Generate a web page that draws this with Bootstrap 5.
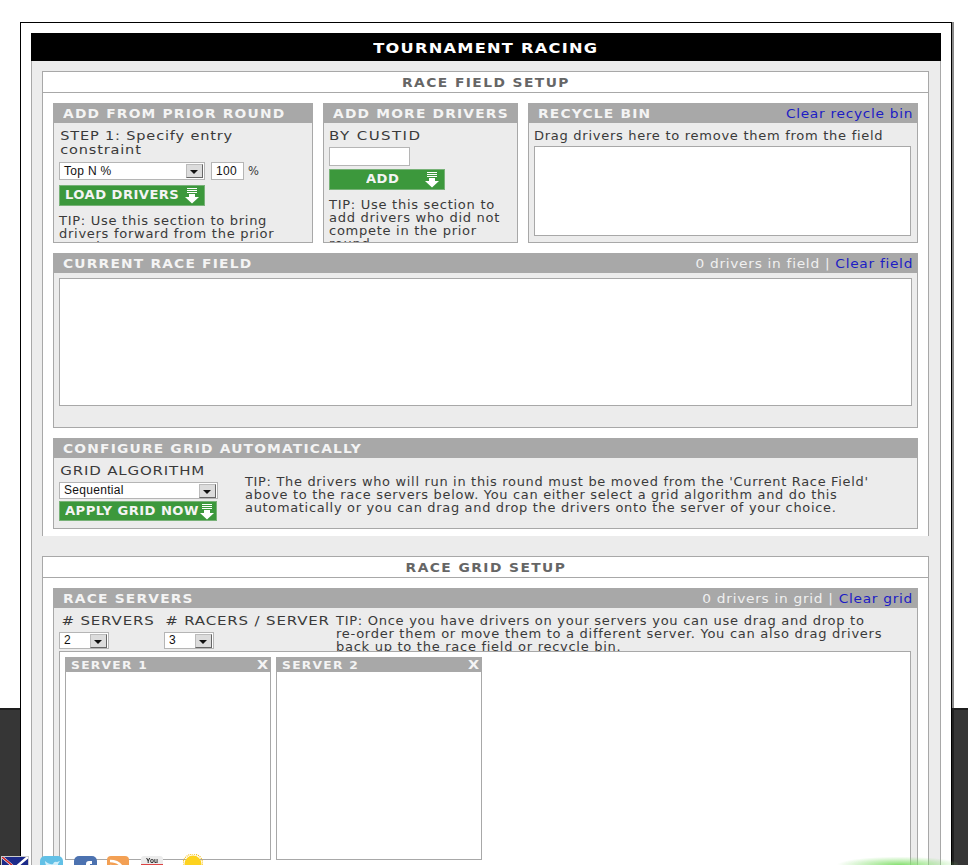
<!DOCTYPE html>
<html lang="en">
<head>
<meta charset="utf-8">
<title>Tournament Racing</title>
<link rel="stylesheet" href="https://cdn.jsdelivr.net/npm/bootstrap@5.3.0/dist/css/bootstrap.min.css">
<style>
html,body{height:865px;overflow:hidden}
body{margin:0;font-family:"DejaVu Sans",sans-serif;font-size:12px;color:#3a3a3a;line-height:13px;
 background:
  linear-gradient(#8a8a8a,#8a8a8a) 952px 22px/2px 686px no-repeat,
  linear-gradient(#202020,#202020) 952px 708px/2px 157px no-repeat,
  linear-gradient(#fff 708px,#1e1e1e 708px,#1e1e1e 710px,#363636 710px)}
.shell{width:932px;height:843px;overflow:hidden;margin:22px 0 0 20px;border:1px solid #000;border-bottom:0;background:#fff;padding:10px}
.page-title{height:28px;background:#000;color:#fff;font-weight:700;font-size:13.5px;letter-spacing:1.05px;line-height:30px;text-align:center}
.page-title span,.setup-title span{display:inline-block;transform:scaleX(1.2)}
.page-body{background:#ececec;border:solid #a8a8a8;border-width:0 1px;padding:10px 11px 0 10px;height:960px}
.setup{background:#fff;border:1px solid #a8a8a8;border-bottom:0;padding:0 10px}
.setup-one{height:465px}
.setup-two{height:440px;margin-top:20px}
.setup-title{height:21px;margin:0 -10px 10px;border-bottom:1px solid #a8a8a8;text-align:center;font-weight:700;font-size:11.5px;letter-spacing:1.2px;color:#666;line-height:22px}
.pane{background:#ececec;border:1px solid #a8a8a8;overflow:hidden}
.pane-head{height:20px;background:#a8a8a8;color:#f4f4f4;margin:-1px -1px 0;padding:0 5px 0 10px;font-weight:700;font-size:11.5px;letter-spacing:1px;line-height:22px;white-space:nowrap}
.head-text{display:inline-block;transform:scaleX(1.2);transform-origin:0 50%}
.head-side{display:inline-block;transform:scaleX(1.145);transform-origin:100% 50%;font-weight:400;font-size:12px;letter-spacing:.62px;color:#f0f0f0}
.head-side a{color:#1c1cc4;text-decoration:none}
.lbl{font-size:12.5px;letter-spacing:.7px;transform:scaleX(1.2);transform-origin:0 50%;white-space:nowrap;padding-left:1px}
.lbl-tall{line-height:14px;font-size:12.1px}
.lbl-cust{letter-spacing:1.2px;padding-left:0}
.tip{font-size:11.5px;letter-spacing:.62px;transform:scaleX(1.135);transform-origin:0 0;white-space:nowrap;padding-top:1px}
.pct{font-size:11.5px;margin-left:4px}
.drop{background:#fff;border:1px solid #a8a8a8}
.fld{display:flex;align-items:center;background:#fff;border:1px solid #b5b5b5;height:18px;font-family:"Liberation Sans",sans-serif;font-size:12px;color:#111;letter-spacing:.3px;padding-left:4px;justify-content:space-between;flex:none}
.arr{width:17px;height:14px;margin-right:1px;background:#dcdcdc;border:1px solid #666;border-top-color:#bbb;border-left-color:#bbb;position:relative;flex:none}
.arr::after{content:"";position:absolute;left:3px;top:5px;border:4px solid transparent;border-top:4px solid #111;border-bottom:0}
.go{display:flex;align-items:center;justify-content:space-between;height:21px;background:#3c983c;border:1px solid #78b278;color:#f4f4f4;font-weight:700;font-size:11.5px;letter-spacing:.4px;padding:0 4px 0 5px;white-space:nowrap}
.go span{display:inline-block;transform:scaleX(1.14);transform-origin:0 50%}
.go svg{flex:none}
.pad-a{padding:6px 5px}
.pad-c{padding:6px 6px 6px 5px}
.pa{width:260px;height:140px;flex:none}
.pb{width:195px;height:140px;flex:none}
.pc{width:390px;height:140px;flex:none}
.panes{gap:10px}
.w-sel{width:146px}
.w-num{width:33px;margin-left:6px}
.sel-row{margin-top:5px}
.go-load{width:146px;margin-top:5px}
.tip-a{margin-top:8px}
.w-cust{width:81px;height:19px;margin-top:5px}
.go-add{width:116px;margin-top:3px;padding-left:36px}
.bin{height:90px;margin-top:3px}
.p-current{height:175px;margin-top:10px}
.d-current{height:128px;margin:5px 5px 0}
.p-config{height:91px;margin-top:10px}
.algo{width:159px;flex:none}
.w-algo{width:159px;height:17px;margin-top:5px}
.go-apply{width:158px;height:20px;margin-top:2px;padding-right:1px}
.tip-config{margin:11px 0 0 27px;transform:scaleX(1.125)}
.p-servers{height:420px}
.srv-row{padding:6px 5px 0;height:43px;overflow:hidden}
.col-n{width:105px;flex:none}
.col-r{width:172px;flex:none}
.lbl-n{padding-left:2px}
.w-small{width:50px;height:17px;margin-top:5px}
.grid-zone{height:360px;margin:0 6px 0 5px;padding:5px 5px 0;gap:5px}
.srv{width:206px;height:203px;border:1px solid #a8a8a8;background:#fff;flex:none}
.srv-head{height:15px;background:#a8a8a8;color:#f4f4f4;font-weight:700;font-size:10.5px;letter-spacing:1.1px;line-height:17px;padding:0 4px 0 6px;margin:-1px -1px 0}
.srv-head span{display:inline-block;transform:scaleX(1.17);transform-origin:0 50%}
.srv-head b{font-size:12px;letter-spacing:0;transform:scaleX(1.2);display:inline-block}
.dock{position:fixed;left:0;right:0;top:854px;height:11px;overflow:hidden;pointer-events:none}
.dock-row{display:flex;align-items:flex-start;padding:2px 0 0 1px}
.dock svg{display:block;flex:none}
.i-tw{margin-left:11px}.i-fb{margin-left:11px}.i-rs{margin-left:10px}.i-yt{margin-left:12px}.i-sun{margin:-2px 0 0 20px}
.glow{position:fixed;left:828px;width:130px;top:853px;height:12px;background:radial-gradient(ellipse 48% 70% at 55% 100%,#86e070,rgba(255,255,255,0))}
</style>
</head>
<body>
<div class="shell">
 <div class="page-title"><span>TOURNAMENT RACING</span></div>
 <div class="page-body">
  <div class="setup setup-one">
   <div class="setup-title"><span>RACE FIELD SETUP</span></div>
   <div class="d-flex panes">
    <div class="pane pa">
     <div class="pane-head"><span class="head-text">ADD FROM PRIOR ROUND</span></div>
     <div class="pad-a">
      <div class="lbl lbl-tall">STEP 1: Specify entry<br>constraint</div>
      <div class="d-flex align-items-center sel-row">
       <div class="fld w-sel">Top N %<i class="arr"></i></div>
       <div class="fld w-num">100</div>
       <div class="pct">%</div>
      </div>
      <div class="go go-load"><span>LOAD DRIVERS</span><svg width="16" height="17" viewBox="0 0 16 17"><path d="M3 1h10v1H3zM3 3h10v1H3zM3 5h10v1H3zM5 7h6v3h4l-7 6.5L1 10h4z" fill="#fff"/></svg></div>
      <div class="tip tip-a">TIP: Use this section to bring<br>drivers forward from the prior<br>round.</div>
     </div>
    </div>
    <div class="pane pb">
     <div class="pane-head"><span class="head-text">ADD MORE DRIVERS</span></div>
     <div class="pad-a">
      <div class="lbl lbl-cust">BY CUSTID</div>
      <div class="fld w-cust"></div>
      <div class="go go-add"><span>ADD</span><svg width="16" height="17" viewBox="0 0 16 17"><path d="M3 1h10v1H3zM3 3h10v1H3zM3 5h10v1H3zM5 7h6v3h4l-7 6.5L1 10h4z" fill="#fff"/></svg></div>
      <div class="tip tip-a">TIP: Use this section to<br>add drivers who did not<br>compete in the prior<br>round.</div>
     </div>
    </div>
    <div class="pane pc">
     <div class="pane-head d-flex justify-content-between"><span class="head-text">RECYCLE BIN</span><span class="head-side"><a href="#">Clear recycle bin</a></span></div>
     <div class="pad-c">
      <div class="tip">Drag drivers here to remove them from the field</div>
      <div class="drop bin"></div>
     </div>
    </div>
   </div>
   <div class="pane p-current">
    <div class="pane-head d-flex justify-content-between"><span class="head-text">CURRENT RACE FIELD</span><span class="head-side">0 drivers in field | <a href="#">Clear field</a></span></div>
    <div class="drop d-current"></div>
   </div>
   <div class="pane p-config">
    <div class="pane-head"><span class="head-text">CONFIGURE GRID AUTOMATICALLY</span></div>
    <div class="d-flex pad-c">
     <div class="algo">
      <div class="lbl">GRID ALGORITHM</div>
      <div class="fld w-algo">Sequential<i class="arr"></i></div>
      <div class="go go-apply"><span>APPLY GRID NOW</span><svg width="16" height="17" viewBox="0 0 16 17"><path d="M3 1h10v1H3zM3 3h10v1H3zM3 5h10v1H3zM5 7h6v3h4l-7 6.5L1 10h4z" fill="#fff"/></svg></div>
     </div>
     <div class="tip tip-config">TIP: The drivers who will run in this round must be moved from the 'Current Race Field'<br>above to the race servers below. You can either select a grid algorithm and do this<br>automatically or you can drag and drop the drivers onto the server of your choice.</div>
    </div>
   </div>
  </div>
  <div class="setup setup-two">
   <div class="setup-title"><span>RACE GRID SETUP</span></div>
   <div class="pane p-servers">
    <div class="pane-head d-flex justify-content-between"><span class="head-text">RACE SERVERS</span><span class="head-side">0 drivers in grid | <a href="#">Clear grid</a></span></div>
    <div class="d-flex srv-row">
     <div class="col-n">
      <div class="lbl lbl-n"># SERVERS</div>
      <div class="fld w-small">2<i class="arr"></i></div>
     </div>
     <div class="col-r">
      <div class="lbl"># RACERS / SERVER</div>
      <div class="fld w-small">3<i class="arr"></i></div>
     </div>
     <div class="tip">TIP: Once you have drivers on your servers you can use drag and drop to<br>re-order them or move them to a different server. You can also drag drivers<br>back up to the race field or recycle bin.</div>
    </div>
    <div class="drop d-flex align-items-start grid-zone">
     <div class="srv"><div class="srv-head d-flex justify-content-between"><span>SERVER 1</span><b>X</b></div></div>
     <div class="srv"><div class="srv-head d-flex justify-content-between"><span>SERVER 2</span><b>X</b></div></div>
    </div>
   </div>
  </div>
 </div>
</div>
<div class="glow"></div>
<div class="dock"><div class="dock-row">
 <svg width="28" height="24" viewBox="0 0 28 24"><rect width="28" height="24" fill="#1c2a8a"/><path d="M0 0 14 12 28 0M2 22 14 10" stroke="#fff" stroke-width="2.5" fill="none"/><path d="M0 0 12 10" stroke="#c22" stroke-width="1.5"/><rect x=".5" y=".5" width="27" height="23" fill="none" stroke="#ccc"/></svg>
 <svg class="i-tw" width="23" height="24" viewBox="0 0 23 24"><rect width="23" height="24" rx="5" fill="#62c0e6"/><path d="M5 5q5 4 8 3 1-3 4-2l3-1-2 3q0 7-6 9Q7 17 4 15q4 0 6-2Q5 10 5 5z" fill="#cfeefa"/></svg>
 <svg class="i-fb" width="23" height="24" viewBox="0 0 23 24"><rect width="23" height="24" rx="5" fill="#4c72b0"/><path d="M12 24V8q0-3 3-3h3v3h-2v3h2v3h-2v10z" fill="#fff"/></svg>
 <svg class="i-rs" width="22" height="24" viewBox="0 0 22 24"><rect width="22" height="24" rx="4" fill="#f3a054"/><path d="M3 5q13 0 14 14M3 10q8 0 9 9" stroke="#fff" stroke-width="2.5" fill="none"/></svg>
 <svg class="i-yt" width="22" height="24" viewBox="0 0 22 24"><rect width="22" height="24" rx="3" fill="#ececec"/><text x="11" y="6.5" text-anchor="middle" font-family="Liberation Sans,sans-serif" font-size="6.5" font-weight="700" fill="#222">You</text><rect y="8" width="22" height="2" fill="#d44"/></svg>
 <svg class="i-sun" width="20" height="24" viewBox="0 0 20 24"><circle cx="10" cy="10" r="10" fill="none" stroke="#f5b800" stroke-width="1.2" stroke-dasharray="1 1"/><circle cx="10" cy="10" r="8.5" fill="#fdd21e"/></svg>
</div></div>
</body>
</html>
